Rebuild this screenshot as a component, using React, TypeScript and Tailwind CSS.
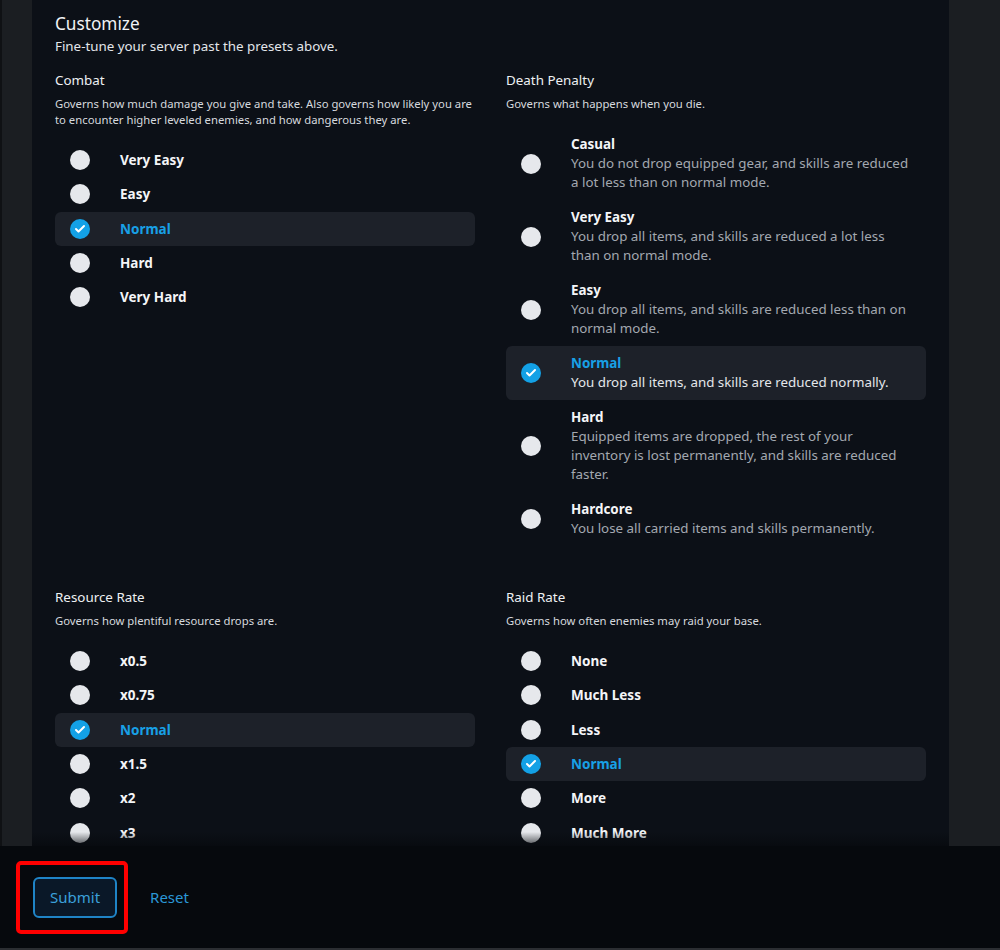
import { Check } from "lucide-react";

type Option = { label: string; desc?: string };

type Group = {
  title: string;
  desc: string;
  options: Option[];
  selected: string;
};

const combat: Group = {
  title: "Combat",
  desc: "Governs how much damage you give and take. Also governs how likely you are to encounter higher leveled enemies, and how dangerous they are.",
  options: [
    { label: "Very Easy" },
    { label: "Easy" },
    { label: "Normal" },
    { label: "Hard" },
    { label: "Very Hard" },
  ],
  selected: "Normal",
};

const deathPenalty: Group = {
  title: "Death Penalty",
  desc: "Governs what happens when you die.",
  options: [
    {
      label: "Casual",
      desc: "You do not drop equipped gear, and skills are reduced a lot less than on normal mode.",
    },
    {
      label: "Very Easy",
      desc: "You drop all items, and skills are reduced a lot less than on normal mode.",
    },
    {
      label: "Easy",
      desc: "You drop all items, and skills are reduced less than on normal mode.",
    },
    { label: "Normal", desc: "You drop all items, and skills are reduced normally." },
    {
      label: "Hard",
      desc: "Equipped items are dropped, the rest of your inventory is lost permanently, and skills are reduced faster.",
    },
    { label: "Hardcore", desc: "You lose all carried items and skills permanently." },
  ],
  selected: "Normal",
};

const resourceRate: Group = {
  title: "Resource Rate",
  desc: "Governs how plentiful resource drops are.",
  options: [
    { label: "x0.5" },
    { label: "x0.75" },
    { label: "Normal" },
    { label: "x1.5" },
    { label: "x2" },
    { label: "x3" },
  ],
  selected: "Normal",
};

const raidRate: Group = {
  title: "Raid Rate",
  desc: "Governs how often enemies may raid your base.",
  options: [
    { label: "None" },
    { label: "Much Less" },
    { label: "Less" },
    { label: "Normal" },
    { label: "More" },
    { label: "Much More" },
  ],
  selected: "Normal",
};

function Radio({ checked }: { checked: boolean }) {
  if (checked) {
    return (
      <span className="flex h-[20px] w-[20px] shrink-0 items-center justify-center rounded-full bg-[#13a1e6]">
        <Check className="h-[12px] w-[12px] text-white" strokeWidth={4} />
      </span>
    );
  }
  return <span className="h-[20px] w-[20px] shrink-0 rounded-full bg-[#e6e8ec]" />;
}

function OptionGroup({ group }: { group: Group }) {
  return (
    <div>
      <h3 className="text-[13.4px] leading-[20px] text-[#eef0f3]">{group.title}</h3>
      <p className="mt-[6px] text-[11.3px] leading-[16px] text-[#d6d9de]">{group.desc}</p>
      <ul className="mt-[15px]">
        {group.options.map((o) => {
          const on = o.label === group.selected;
          return (
            <li
              key={o.label}
              className={`flex items-center rounded-md ${
                on ? "bg-[#1d2129]" : ""
              } ${o.desc ? "py-[8px]" : "h-[34.3px]"}`}
            >
              <span className="flex w-[65px] shrink-0 pl-[15px]">
                <Radio checked={on} />
              </span>
              {o.desc ? (
                <div className="pr-[16px]">
                  <div
                    className={`text-[13.4px] font-bold leading-[19px] ${
                      on ? "text-[#18a0e6]" : "text-[#f4f5f7]"
                    }`}
                  >
                    {o.label}
                  </div>
                  <div
                    className={`text-[13.35px] leading-[19px] ${
                      on ? "text-[#e4e7eb]" : "text-[#a3a8b0]"
                    }`}
                  >
                    {o.desc}
                  </div>
                </div>
              ) : (
                <span
                  className={`text-[13.5px] font-bold ${
                    on ? "text-[#18a0e6]" : "text-[#f4f5f7]"
                  }`}
                >
                  {o.label}
                </span>
              )}
            </li>
          );
        })}
      </ul>
    </div>
  );
}

export default function App() {
  return (
    <div className="flex h-[950px] flex-col overflow-hidden bg-[#1b1e22] font-['Noto_Sans',sans-serif]">
      <div className="flex min-h-0 flex-1 border-l-2 border-[#0f1114]">
        <div className="relative ml-[30px] w-[917px] overflow-hidden bg-[#0c1017]">
          <div className="px-[23px] pt-[12px]">
            <h2 className="text-[17.2px] leading-[24px] text-[#f1f3f5]">Customize</h2>
            <p className="text-[13.35px] leading-[20px] text-[#e3e6ea]">
              Fine-tune your server past the presets above.
            </p>
            <div className="mt-[14px] grid grid-cols-2 gap-x-[31px] gap-y-[41px]">
              <OptionGroup group={combat} />
              <OptionGroup group={deathPenalty} />
              <OptionGroup group={resourceRate} />
              <OptionGroup group={raidRate} />
            </div>
          </div>
          <div className="pointer-events-none absolute inset-x-0 bottom-0 h-[14px] bg-gradient-to-b from-transparent to-[#06090d]/70" />
        </div>
      </div>
      <footer className="flex h-[104px] shrink-0 items-center border-b-2 border-[#2b2e32] bg-[#06090d] pl-[16px]">
        <div className="rounded-[5px] border-[4px] border-[#ff0000] py-[12px] pl-[13px] pr-[7px]">
          <button className="h-[41px] rounded-[6px] border-2 border-[#1f84c6] bg-[#0a1828] px-[15px] text-[15px] text-[#3aa0da]">
            Submit
          </button>
        </div>
        <button className="ml-[22px] text-[15px] text-[#2a97d6]">Reset</button>
      </footer>
    </div>
  );
}
